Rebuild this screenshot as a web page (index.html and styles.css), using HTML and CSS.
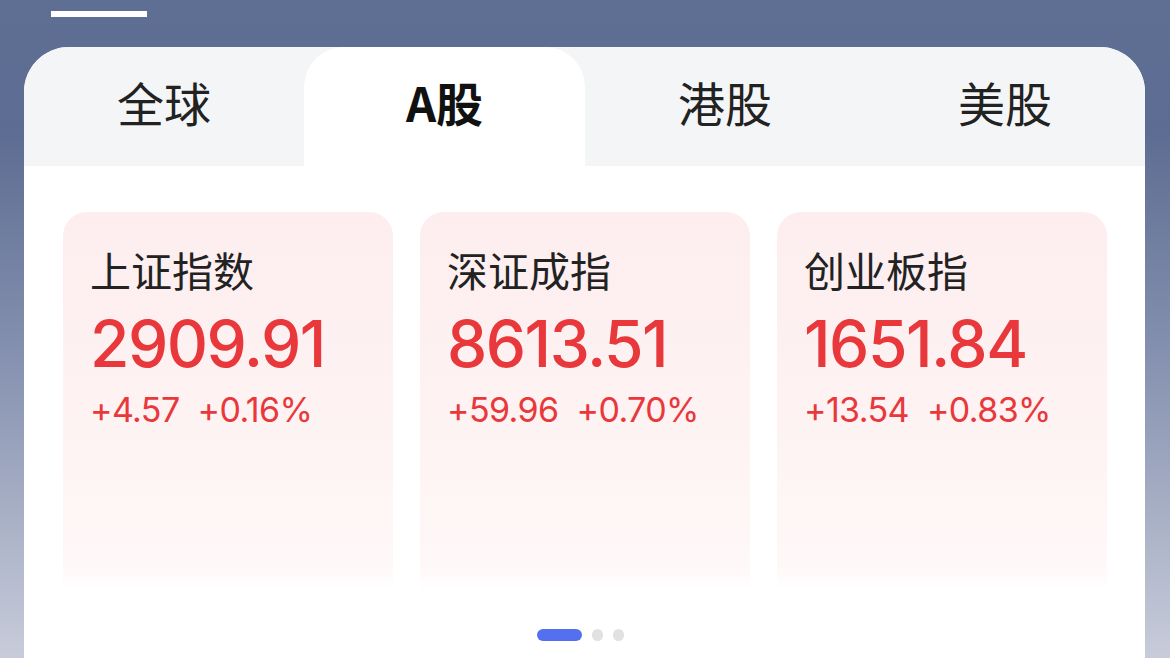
FILE: index.html
```html
<!DOCTYPE html>
<html lang="zh-CN">
<head>
<meta charset="utf-8">
<title>行情</title>
<link rel="stylesheet" href="styles.css">
</head>
<body>
<div class="screen">
  <div class="handle"></div>
  <div class="panel">
    <div class="tabs">
      <div class="tab">全球</div>
      <div class="tab active">A股</div>
      <div class="tab">港股</div>
      <div class="tab">美股</div>
    </div>
    <div class="cards">
      <div class="card">
        <div class="name">上证指数</div>
        <div class="price">2909.91</div>
        <div class="change"><span>+4.57</span><span>+0.16%</span></div>
      </div>
      <div class="card">
        <div class="name">深证成指</div>
        <div class="price">8613.51</div>
        <div class="change"><span>+59.96</span><span>+0.70%</span></div>
      </div>
      <div class="card">
        <div class="name">创业板指</div>
        <div class="price">1651.84</div>
        <div class="change"><span>+13.54</span><span>+0.83%</span></div>
      </div>
    </div>
    <div class="dots">
      <span class="dot current"></span>
      <span class="dot"></span>
      <span class="dot"></span>
    </div>
  </div>
</div>
</body>
</html>
```

FILE: styles.css
```css
* { box-sizing: border-box; }
html, body { margin: 0; padding: 0; }
body {
  width: 1170px;
  height: 658px;
  overflow: hidden;
  font-family: "Noto Sans CJK SC", "Noto Sans", sans-serif;
}
.screen {
  width: 1170px;
  height: 658px;
  overflow: hidden;
  padding-top: 11px;
  background: linear-gradient(180deg, #5f6e93 0%, #5d6c92 20%, #8692b0 55%, #c8ccda 100%);
}
.handle {
  width: 96px;
  height: 6px;
  margin-left: 51px;
  background: #ffffff;
}
.panel {
  margin: 30px 25px 0 24px;
  height: 620px;
  background: #ffffff;
  border-radius: 45px 45px 0 0;
  overflow: hidden;
}
.tabs {
  display: grid;
  grid-template-columns: 280px 281px 280px 280px;
  height: 119px;
  background: #f4f5f7;
}
.tab {
  display: flex;
  align-items: center;
  justify-content: center;
  font-size: 47px;
  color: #222222;
  padding-bottom: 10px;
}
.tab.active {
  background: #ffffff;
  border-radius: 40px 40px 0 0;
  font-weight: 700;
  color: #111111;
}
.cards {
  display: grid;
  grid-template-columns: repeat(3, 330px);
  gap: 27px;
  padding: 46px 0 0 39px;
}
.card {
  height: 378px;
  border-radius: 24px 24px 0 0;
  background: linear-gradient(180deg, #fdedef 0%, #fef3f3 60%, #fff8f8 94%, #ffffff 100%);
  padding: 33px 0 0 27px;
}
.name {
  font-size: 41px;
  line-height: 48px;
  color: #222222;
}
.price {
  margin-top: 13px;
  font-family: Inter, Roboto, "Liberation Sans", sans-serif;
  font-weight: 500;
  font-size: 64px;
  line-height: 76px;
  letter-spacing: -1.5px;
  color: #e8383b;
}
.change {
  margin-top: 7px;
  display: flex;
  gap: 18px;
  font-family: Inter, Roboto, "Liberation Sans", sans-serif;
  font-size: 34px;
  line-height: 42px;
  letter-spacing: -0.6px;
  color: #e8383b;
}
.dots {
  display: flex;
  justify-content: center;
  gap: 10px;
  margin-top: 39px;
  padding-right: 8px;
}
.dot {
  width: 11px;
  height: 12px;
  border-radius: 6px;
  background: #e1e1e3;
}
.dot.current {
  width: 45px;
  background: #5470f0;
}
```
